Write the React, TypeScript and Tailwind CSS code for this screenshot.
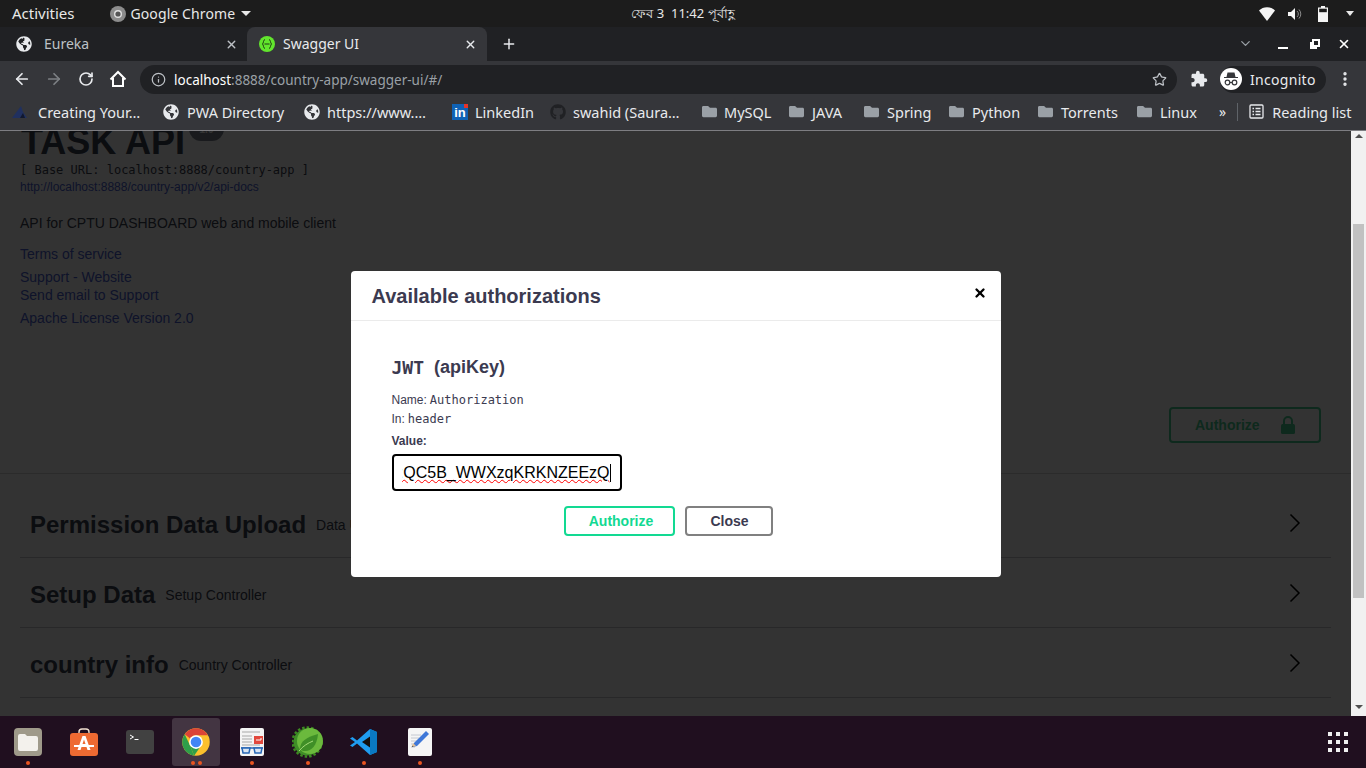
import React from 'react';
import { ArrowLeft, ArrowRight, ChevronDown, EllipsisVertical, Info, Plus, RotateCw, Star, X } from 'lucide-react';
import { FaFolder, FaGithub, FaGlobeAmericas } from 'react-icons/fa';
import { MdExtension } from 'react-icons/md';

const SwaggerIcon = () => (
  <svg width="16" height="16" viewBox="0 0 16 16">
    <circle cx="8" cy="8" r="8" fill="#62e52d" />
    <path d="M6 3.5C4 4 4.8 7 3.5 8c1.3 1 .5 4 2.5 4.5M10 3.5C12 4 11.2 7 12.5 8c-1.3 1-.5 4-2.5 4.5M5.5 8h5" fill="none" stroke="#1d3a12" strokeWidth="1" />
  </svg>
);

const HomeIcon = () => (
  <svg width="18" height="18" viewBox="0 0 18 18" fill="none" stroke="#fff" strokeWidth="2">
    <path d="M1.5 9.5 9 2l7.5 7.5M4 8v8h10V8" />
  </svg>
);

const IncognitoIcon = () => (
  <svg width="22" height="22" viewBox="0 0 22 22">
    <circle cx="11" cy="11" r="11" fill="#fff" />
    <path d="M7.5 4.5h7l1 4.5H18v1H4V9h2.5z" fill="#35363a" />
    <circle cx="7.5" cy="14.5" r="2.3" fill="none" stroke="#35363a" strokeWidth="1.2" />
    <circle cx="14.5" cy="14.5" r="2.3" fill="none" stroke="#35363a" strokeWidth="1.2" />
    <path d="M9.8 14.5h2.4" stroke="#35363a" strokeWidth="1.2" />
  </svg>
);

const ReadingIcon = () => (
  <svg width="15" height="15" viewBox="0 0 15 15" fill="none" stroke="#e8eaed" strokeWidth="1.3">
    <rect x="1" y="1" width="13" height="13" rx="1" />
    <path d="M3.5 4.5H5M6.5 4.5h5M3.5 7.5H5M6.5 7.5h5M3.5 10.5H5M6.5 10.5h5" />
  </svg>
);

const CreatingIcon = () => (
  <svg width="17" height="14" viewBox="0 0 17 14">
    <path d="M1 13 10 1l2 6 4 6z" fill="#20305f" />
    <path d="M9 13l3-5 2 5z" fill="#10182f" />
  </svg>
);

const LinkedInIcon = () => (
  <div className="relative flex h-4 w-4 items-end justify-center bg-[#0f62b5] font-['Liberation_Sans',sans-serif] text-[13px] leading-[15px] font-bold text-white">
    in
    <div className="absolute top-0 right-0 h-1 w-1 bg-[#e5342b]" />
  </div>
);

const ChromeLogo = ({ size }: { size: number }) => (
  <svg width={size} height={size} viewBox="0 0 48 48">
    <circle cx="24" cy="24" r="22" fill="#fbc02d" />
    <path d="M5.95 11.4 14.47 29.5 21 45.8A22 22 0 0 1 5.95 11.4z" fill="#2e9e4a" />
    <path d="M14.47 29.5 21 45.8 29.5 33.5z" fill="#2e9e4a" />
    <path d="M5.95 11.4A22 22 0 0 1 43.05 13H24a11 11 0 0 0-9.53 5.5z" fill="#db4437" />
    <circle cx="24" cy="24" r="11" fill="#fff" />
    <circle cx="24" cy="24" r="8.5" fill="#4285f4" />
  </svg>
);

const ChromeGray = () => (
  <svg width="16" height="16" viewBox="0 0 16 16" className="block">
    <circle cx="8" cy="8" r="8" fill="#8c8c8c" />
    <circle cx="8" cy="8" r="4" fill="#e0e0e0" />
    <circle cx="8" cy="8" r="2.6" fill="#555" />
  </svg>
);

const FilesIcon = () => (
  <svg width="30" height="30" viewBox="0 0 30 30">
    <rect x="1" y="1" width="28" height="28" rx="4" fill="#9f9a8a" />
    <path d="M5 9a2 2 0 0 1 2-2h5l2 2h9a2 2 0 0 1 2 2v11a2 2 0 0 1-2 2H7a2 2 0 0 1-2-2z" fill="#f3f1ec" />
  </svg>
);

const SoftwareIcon = () => (
  <svg width="30" height="30" viewBox="0 0 30 30">
    <path d="M10 7V5a3 3 0 0 1 3-3h4a3 3 0 0 1 3 3v2" fill="none" stroke="#f0e0d0" strokeWidth="1.4" />
    <rect x="1" y="6" width="28" height="23" rx="3" fill="#ee6a32" />
    <path d="M13.5 9h3l5 14h-3l-1-3h-5l-1 3h-3zM13.5 17h3L15 12.5z" fill="#fff" fillRule="evenodd" />
    <path d="M5 18h20v2H5z" fill="#fff" />
  </svg>
);

const TerminalIcon = () => (
  <svg width="28" height="24" viewBox="0 0 28 24">
    <rect width="28" height="24" rx="3" fill="#414141" />
    <path d="M4 5l3.5 2L4 9" fill="none" stroke="#fff" strokeWidth="1" />
    <path d="M8.5 9.500h4" stroke="#fff" strokeWidth="1" />
  </svg>
);

const ReaderIcon = () => (
  <svg width="26" height="30" viewBox="0 0 26 30">
    <rect x="1" y="1" width="24" height="28" rx="2" fill="#f4f4f4" />
    <path d="M3 5h18M3 9h10M3 12h10M3 15h10M3 18h18" stroke="#a8a8a8" strokeWidth="1" />
    <rect x="15" y="9" width="9" height="8" fill="#e2483d" />
    <path d="M17 13h5v-2" stroke="#fff" strokeWidth="1" fill="none" />
    <path d="M2 21h22" stroke="#2766b5" strokeWidth="1.5" />
    <path d="M3 21h8l-1 5H4zM15 21h8l-1 5h-6z" fill="#d9e4f2" stroke="#2766b5" strokeWidth="1.5" />
  </svg>
);

const SpringIcon = () => (
  <svg width="32" height="32" viewBox="0 0 32 32">
    <circle cx="15" cy="16" r="13.5" fill="#3f8f27" />
    <circle cx="15" cy="16" r="14.5" fill="none" stroke="#3d8a22" strokeWidth="2.5" strokeDasharray="2.5 2" />
    <circle cx="18" cy="15" r="13" fill="#6bb93d" />
    <path d="M8 23c0-8 7-12 18-15-1 11-6 17-13 17-2 0-4-.5-5-2z" fill="#3f8f27" />
    <path d="M7 25c4-5 9-8 14-10" stroke="#a6dc7a" strokeWidth="1" fill="none" />
  </svg>
);

const VSCodeIcon = () => (
  <svg width="28" height="28" viewBox="0 0 28 28">
    <path d="M20 1 27 4v20l-7 3-13-11.5L2.5 19 0 17.5 5 14 0 10.5 2.5 9 7 12.5z" fill="#1f9cf0" />
    <path d="M20 1 27 4v20l-7 3z" fill="#0a78c2" />
    <path d="M20 8.5 12 14l8 5.500z" fill="#14100f" />
  </svg>
);

const EditorIcon = () => (
  <svg width="26" height="30" viewBox="0 0 26 30">
    <rect x="1" y="1" width="24" height="28" rx="2" fill="#f5f5f5" />
    <path d="M4 8h10M4 11h8M4 14h6M4 17h5M4 20h4" stroke="#c4c8d0" strokeWidth="1" />
    <path d="M19 4l3 3-12 12-4 1 1-4z" fill="#3f78d8" />
    <path d="M6 16l-1 4 4-1z" fill="#e5c090" />
    <path d="M5.5 18.5 5 20l1.5-.5z" fill="#333" />
  </svg>
);

const bookmarks = [
  { icon: <CreatingIcon />, label: 'Creating Your…', box: 'w-[152px]', gap: 'gap-[10px]' },
  { icon: <FaGlobeAmericas size={16} color="#e8eaed" />, label: 'PWA Directory', box: 'w-[141px]', gap: 'gap-[8px]' },
  { icon: <FaGlobeAmericas size={16} color="#e8eaed" />, label: 'https://www.…', box: 'w-[148px]', gap: 'gap-[7px]' },
  { icon: <LinkedInIcon />, label: 'LinkedIn', box: 'w-[98px]', gap: 'gap-[7px]' },
  { icon: <FaGithub size={16} color="#202124" />, label: 'swahid (Saura…', box: 'w-[152px]', gap: 'gap-[7px]' },
  { icon: <FaFolder size={15} color="#9aa0a6" />, label: 'MySQL', box: 'w-[87px]', gap: 'gap-[7px]' },
  { icon: <FaFolder size={15} color="#9aa0a6" />, label: 'JAVA', box: 'w-[75px]', gap: 'gap-[8px]' },
  { icon: <FaFolder size={15} color="#9aa0a6" />, label: 'Spring', box: 'w-[85px]', gap: 'gap-[8px]' },
  { icon: <FaFolder size={15} color="#9aa0a6" />, label: 'Python', box: 'w-[89px]', gap: 'gap-[8px]' },
  { icon: <FaFolder size={15} color="#9aa0a6" />, label: 'Torrents', box: 'w-[99px]', gap: 'gap-[8px]' },
  { icon: <FaFolder size={15} color="#9aa0a6" />, label: 'Linux', box: 'w-[82px]', gap: 'gap-[8px]' },
];

const dockItems = [
  { icon: <FilesIcon />, dots: 1 },
  { icon: <SoftwareIcon />, dots: 0 },
  { icon: <TerminalIcon />, dots: 0 },
  { icon: <ChromeLogo size={30} />, dots: 2, active: true },
  { icon: <ReaderIcon />, dots: 1 },
  { icon: <SpringIcon />, dots: 1 },
  { icon: <VSCodeIcon />, dots: 1 },
  { icon: <EditorIcon />, dots: 1 },
];

const sections = [
  { name: 'Permission Data Upload', desc: 'Data Upload Controller' },
  { name: 'Setup Data', desc: 'Setup Controller' },
  { name: 'country info', desc: 'Country Controller' },
];

const TopBar = () => (
  <div className="grid h-[27px] grid-cols-[1fr_auto_1fr] items-center bg-[#1c1c1c] text-[14px] text-[#e8e8e8]">
    <div className="flex items-center pl-3">
      <span className="text-[15px]">Activities</span>
      <div className="ml-[35px] flex items-center gap-[5px]">
        <ChromeGray />
        <span className="tracking-[0.1px]">Google Chrome</span>
        <div className="ml-[1px] h-0 w-0 border-x-[5px] border-t-[5px] border-x-transparent border-t-[#e8e8e8]" />
      </div>
    </div>
    <div className="text-[13px]">ফেব 3&nbsp;&nbsp;11:42 পূর্বাহ্ণ</div>
    <div className="flex items-center justify-end pr-[12px]">
      <svg width="16" height="14" viewBox="0 0 16 14"><path d="M0 3.5C4-1 12-1 16 3.5L8 14z" fill="#f5f5f5" /></svg>
      <svg className="ml-[13px]" width="14" height="12" viewBox="0 0 14 12"><path d="M0 4h3l4-4v12L3 8H0z" fill="#f5f5f5" /><path d="M9 3a4 4 0 0 1 0 6M11 1.5a6.5 6.5 0 0 1 0 9" fill="none" stroke="#8a8a8a" /></svg>
      <svg className="ml-[16px]" width="10" height="16" viewBox="0 0 10 16"><path d="M3 0h4v1.5h3V16H0V1.5h3z" fill="#f5f5f5" /><rect x="1.2" y="2.7" width="7.6" height="3.5" fill="#1c1c1c" /></svg>
      <div className="ml-[18px] h-0 w-0 border-x-[4px] border-t-[5px] border-x-transparent border-t-[#e8e8e8]" />
    </div>
  </div>
);

const TabStrip = () => (
  <div className="flex h-[34px] items-end bg-[#202124] text-[14px] leading-[18px]">
    <div className="flex h-full w-[247px] items-center pl-[16px] text-[#bdc1c6]">
      <FaGlobeAmericas size={16} color="#e8eaed" />
      <span className="ml-[12px] flex-1">Eureka</span>
      <X size={13} color="#bdc1c6" className="mr-[9px]" strokeWidth={2.5} />
    </div>
    <div className="flex h-full w-[240px] items-center rounded-t-lg bg-[#35363a] pl-[12px] text-[#e8eaed]">
      <SwaggerIcon />
      <span className="ml-[8px] flex-1">Swagger UI</span>
      <X size={13} color="#e8eaed" className="mr-[10px]" strokeWidth={2.5} />
    </div>
    <div className="flex h-full flex-1 items-center pb-[1px] pl-[14px]">
      <Plus size={16} color="#e8eaed" strokeWidth={2.2} />
      <div className="flex-1" />
      <ChevronDown size={15} color="#9aa0a6" className="mr-[25px]" />
      <div className="mr-[22px] mt-[8px] h-[2px] w-[10px] bg-white" />
      <svg className="mr-[17px]" width="10" height="10" viewBox="0 0 10 10" fill="none" stroke="#fff" strokeWidth="2"><path d="M3 1h6v6H3zM1 3v6h6" /></svg>
      <X size={14} color="#fff" className="mr-[15px]" strokeWidth={2.8} />
    </div>
  </div>
);

const Toolbar = () => (
  <div className="flex h-[36px] items-center bg-[#35363a]">
    <div className="flex w-[140px] items-center pl-[13px]">
      <ArrowLeft size={18} color="#e8eaed" strokeWidth={2.3} />
      <ArrowRight size={18} color="#7d8084" strokeWidth={2.3} className="ml-[14px]" />
      <RotateCw size={16} color="#e8eaed" strokeWidth={2.5} className="ml-[15px]" />
      <div className="ml-[15px]"><HomeIcon /></div>
    </div>
    <div className="flex h-[29px] w-[1037px] items-center rounded-full bg-[#202124] pl-[11px] pr-[10px] text-[13.5px]">
      <Info size={15} color="#bdc1c6" />
      <span className="ml-[8px] mt-[2px] flex-1 text-[#9aa0a6]"><span className="text-white">localhost</span>:8888/country-app/swagger-ui/#/</span>
      <Star size={15} color="#bdc1c6" />
    </div>
    <MdExtension size={18} color="#e8eaed" className="ml-[13px]" />
    <div className="ml-[12px] flex h-[27px] w-[106px] items-center rounded-full bg-[#202124] text-[14px] tracking-[0.3px] text-[#e8eaed]">
      <IncognitoIcon />
      <span className="ml-[8px]">Incognito</span>
    </div>
    <EllipsisVertical size={18} color="#e8eaed" className="ml-[10px]" strokeWidth={2.5} />
  </div>
);

const BookmarksBar = () => (
  <div className="flex h-[34px] items-center border-b border-[#7e7e82] bg-[#35363a] pb-[4px] pl-[11px] text-[14.5px] leading-[18px] whitespace-nowrap text-[#e8eaed]">
    {bookmarks.map((b) => (
      <div key={b.label} className={`flex shrink-0 items-center ${b.box} ${b.gap}`}>
        {b.icon}
        <span>{b.label}</span>
      </div>
    ))}
    <span className="text-[14px]">»</span>
    <div className="ml-[11px] h-[18px] w-px bg-[#5f6368]" />
    <div className="ml-[11px]"><ReadingIcon /></div>
    <span className="ml-[8px]">Reading list</span>
  </div>
);

const AuthDialog = () => (
  <div className="h-[306px] w-[650px] rounded bg-white font-['Liberation_Sans',sans-serif] text-[#3b3a50]">
    <div className="flex h-[50px] items-center justify-between border-b border-[#ebebeb] pl-[21px] pr-[14px]">
      <h3 className="text-[20px] font-bold">Available authorizations</h3>
      <X size={14} color="#000" strokeWidth={4} className="mb-[6px]" />
    </div>
    <div className="pl-[41px] pt-[35px]">
      <h4 className="flex h-[22px] items-center text-[18px] font-bold">
        <code className="font-['DejaVu_Sans_Mono',monospace]">JWT</code>
        <span className="ml-[10px]">(apiKey)</span>
      </h4>
      <div className="mt-[14px] flex h-[16px] items-center text-[12px]">
        <span>Name:</span>
        <code className="ml-[3px] font-['DejaVu_Sans_Mono',monospace]">Authorization</code>
      </div>
      <div className="mt-[3px] flex h-[16px] items-center text-[12px]">
        <span>In:</span>
        <code className="ml-[3px] font-['DejaVu_Sans_Mono',monospace]">header</code>
      </div>
      <label className="mt-[6px] flex h-[16px] items-center text-[12px] font-bold">Value:</label>
      <div className="mt-[5px] flex h-[37px] w-[230px] items-center rounded border-2 border-black pl-[8px] pr-[9px] text-[16px] text-black">
        <div className="flex flex-1 justify-end overflow-hidden">
          <span className="whitespace-nowrap underline decoration-[#f00] decoration-wavy decoration-1 underline-offset-[1px]">:QC5B_WWXzqKRKNZEEzQ</span>
        </div>
        <div className="h-[18px] w-px bg-black" />
      </div>
      <div className="mt-[15px] flex w-[553px] justify-center gap-[10px] text-[14px] font-bold">
        <button className="h-[30px] w-[111px] rounded border-2 border-[#12d992] pl-[4px] text-[#12d992]">Authorize</button>
        <button className="h-[30px] w-[88px] rounded border-2 border-[#808080] pl-[2px]">Close</button>
      </div>
    </div>
  </div>
);

const SwaggerPage = () => (
  <div className="relative flex-1 overflow-hidden bg-white font-['Liberation_Sans',sans-serif] text-[#3b4151]">
    <div className="px-[20px]">
      <div className="relative -mt-[9px] flex h-[40px] items-center text-[36px] font-bold">
        <span className="ml-[1px]">TASK API</span>
        <span className="absolute top-[-5px] left-[169px] flex h-[24px] w-[35px] items-center justify-center rounded-full bg-[#7d8492] text-[10px] text-white">1.0</span>
      </div>
      <div className="h-[16px] font-['DejaVu_Sans_Mono',monospace] text-[12px] leading-[16px]">[ Base URL: localhost:8888/country-app ]</div>
      <div className="mt-[1px] h-[16px] text-[12px] leading-[16px] text-[#4a5fd0]">http://localhost:8888/country-app/v2/api-docs</div>
      <p className="mt-[18px] h-[20px] text-[14px] leading-[20px]">API for CPTU DASHBOARD web and mobile client</p>
      <div className="mt-[11px] h-[20px] text-[14px] leading-[20px] text-[#4a5fd0]">Terms of service</div>
      <div className="mt-[4px] text-[14px] leading-[18px] text-[#4a5fd0]">Support - Website</div>
      <div className="text-[14px] leading-[18px] text-[#4a5fd0]">Send email to Support</div>
      <div className="mt-[5px] text-[14px] leading-[18px] text-[#4a5fd0]">Apache License Version 2.0</div>
    </div>
    <div className="mt-[80px] flex h-[67px] items-start justify-end border-b border-[#d8d8d8] pr-[30px]">
      <button className="flex h-[36px] w-[152px] items-center justify-between rounded border-2 border-[#49cc90] pl-[24px] pr-[23px] text-[14px] font-bold text-[#49cc90]">
        Authorize
        <svg width="16" height="18" viewBox="0 0 16 18" fill="#49cc90"><path d="M8 0a5 5 0 0 1 5 5v3h-2V5a3 3 0 0 0-6 0v3H3V5a5 5 0 0 1 5-5z" /><rect x="1" y="8" width="14" height="10" rx="1.5" /></svg>
      </button>
    </div>
    <div className="mx-[20px] mt-[14px]">
      {sections.map((s) => (
        <div key={s.name} className="flex h-[70px] items-center border-b border-[#c8c8cc] pl-[10px] pr-[30px] pt-[4px]">
          <h2 className="text-[24px] font-bold">{s.name}</h2>
          <span className="ml-[10px] mt-[2px] flex-1 text-[14px]">{s.desc}</span>
          <svg width="12" height="20" viewBox="0 0 12 20" fill="none" stroke="#000" strokeWidth="1.5" className="mb-[4px]"><path d="M1.5 1.5 10 10l-8.5 8.5" /></svg>
        </div>
      ))}
    </div>
    {/* dimmed backdrop + modal */}
    <div className="absolute inset-0 flex items-start justify-center bg-black/80 pt-[140px]">
      <AuthDialog />
    </div>
  </div>
);

const Scrollbar = () => (
  <div className="flex w-[15px] flex-col items-center bg-[#f1f1f1]">
    <div className="mt-[3px] h-0 w-0 border-x-[4px] border-b-[4px] border-x-transparent border-b-[#505050]" />
    <div className="mt-[86px] h-[374px] w-[11px] bg-[#c1c1c1]" />
    <div className="mt-[107px] h-0 w-0 border-x-[4px] border-t-[4px] border-x-transparent border-t-[#505050]" />
  </div>
);

const Dock = () => (
  <div className="flex h-[52px] items-center justify-between bg-[#200f1f]">
    <div className="flex">
      {dockItems.map((item, i) => (
        <div key={i} className="flex w-[56px] justify-center">
          <div className={`relative flex h-[48px] w-[48px] items-center justify-center rounded-[3px] ${item.active ? 'bg-[#433542]' : ''}`}>
            {item.icon}
            <div className="absolute bottom-[1px] flex gap-[3px]">
              {Array.from({ length: item.dots }).map((_, d) => (
                <div key={d} className="h-[4px] w-[4px] rounded-full bg-[#e95420]" />
              ))}
            </div>
          </div>
        </div>
      ))}
    </div>
    <div className="mr-[18px] grid grid-cols-3 gap-[4px]">
      {Array.from({ length: 9 }).map((_, i) => (
        <div key={i} className="h-[4px] w-[4px] bg-[#f0f0f0]" />
      ))}
    </div>
  </div>
);

export default function App() {
  return (
    <div className="flex h-[768px] w-[1366px] flex-col overflow-hidden font-['Noto_Sans',sans-serif]">
      <TopBar />
      <TabStrip />
      <Toolbar />
      <BookmarksBar />
      <div className="flex min-h-0 flex-1">
        <SwaggerPage />
        <Scrollbar />
      </div>
      <Dock />
    </div>
  );
}
